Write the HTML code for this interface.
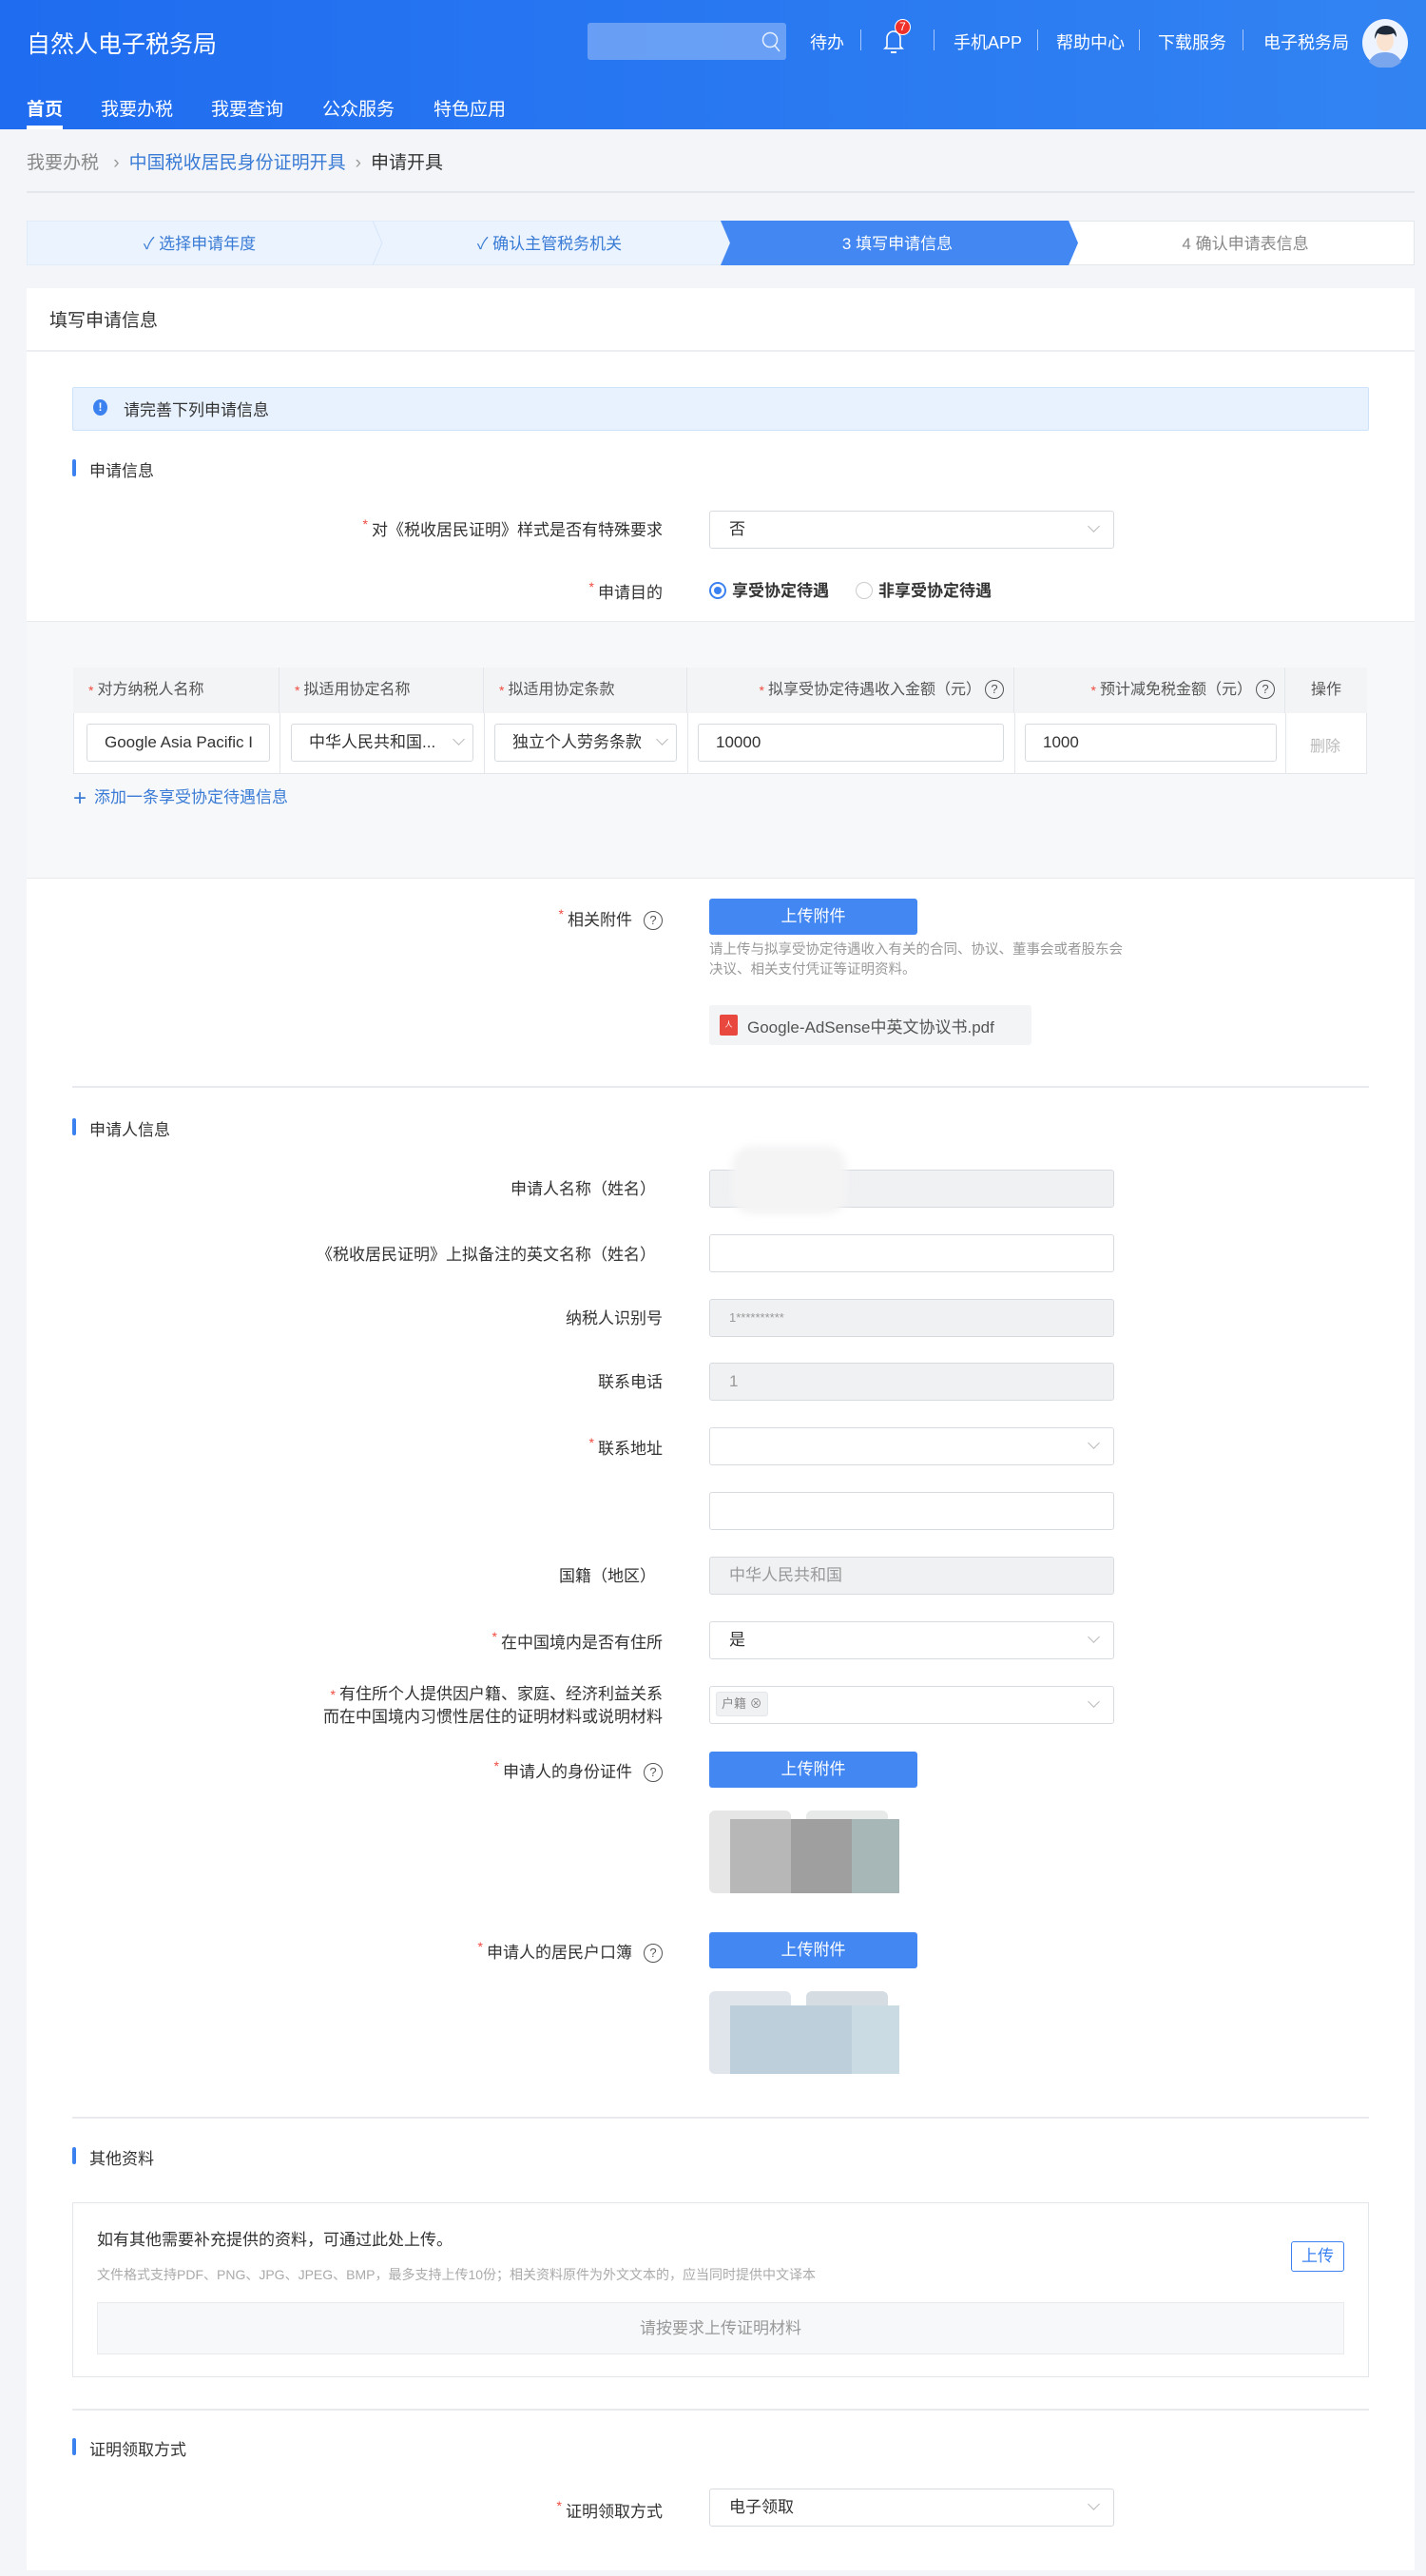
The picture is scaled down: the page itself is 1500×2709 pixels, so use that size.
<!DOCTYPE html>
<html><head><meta charset="utf-8">
<style>
*{box-sizing:border-box;margin:0;padding:0}
body{width:1500px;height:2709px;background:#f3f5f8;font-family:"Liberation Sans","Noto Sans CJK SC",sans-serif;color:#333;position:relative;overflow:hidden}
.a{position:absolute}
.hdr{left:0;top:0;width:1500px;height:136px;background:linear-gradient(90deg,#1f6cf0,#3283f2)}
.wt{color:#fff}
.lbl{position:absolute;right:803px;font-size:17px;color:#333;text-align:right;white-space:nowrap}
.req{color:#f04a3e;margin-right:4px;font-size:14px;vertical-align:top}
.inp{position:absolute;left:746px;width:426px;height:40px;border:1px solid #d7dbe0;border-radius:3px;background:#fff;font-size:17px;padding:0 20px;line-height:38px;color:#333}
.dis{background:#f0f1f3;color:#999}
.arr{position:absolute;right:16px;top:11px;width:9px;height:9px;border-right:1.3px solid #bbb;border-bottom:1.3px solid #bbb;transform:rotate(45deg);}
.sec{position:absolute;left:76px;font-size:17px;color:#333;padding-left:18px}
.sec:before{content:"";position:absolute;left:0;top:2px;width:4px;height:18px;background:#3b82f0;border-radius:2px}
.btn{position:absolute;left:746px;width:219px;height:38px;background:#4287f2;color:#fff;border-radius:3px;font-size:17px;text-align:center;line-height:38px}
.q{display:inline-block;width:20px;height:20px;border:1.5px solid #555;border-radius:50%;font-size:13px;line-height:17px;text-align:center;color:#555;margin-left:12px;vertical-align:1px}
.hr{position:absolute;left:76px;width:1364px;height:2px;background:#e8eaee}
.th{position:absolute;top:702px;height:48px;font-size:16px;color:#555;line-height:48px;padding-left:16px;border-right:1px solid #e3e6ea;white-space:nowrap}
.ti{position:absolute;top:761px;height:40px;border:1px solid #d7dbe0;border-radius:3px;background:#fff;font-size:17px;line-height:38px;padding:0 18px;white-space:nowrap;overflow:hidden;color:#333}
</style></head><body>
<div class="a hdr"></div>
<div class="a wt" style="left:28px;top:27px;font-size:25px">自然人电子税务局</div>
<div class="a" style="left:618px;top:24px;width:209px;height:39px;background:rgba(255,255,255,.3);border-radius:3px"></div>
<svg class="a" style="left:800px;top:32px" width="22" height="24" viewBox="0 0 22 24"><circle cx="10" cy="10" r="7.5" fill="none" stroke="#e6efff" stroke-width="1.5"/><path d="M15 16l5 6" stroke="#e6efff" stroke-width="1.5"/></svg>
<div class="a wt" style="left:852px;top:31px;font-size:18px">待办</div>
<div class="a" style="left:905px;top:31px;width:1px;height:22px;background:#a9c6fb"></div>
<svg class="a" style="left:928px;top:28px" width="24" height="30" viewBox="0 0 24 30"><path d="M5 21V12a7 7 0 0114 0v9l2 2H3z" fill="none" stroke="#fff" stroke-width="1.6"/><path d="M9 27h6" stroke="#fff" stroke-width="2"/></svg>
<div class="a" style="left:941px;top:20px;width:17px;height:17px;border-radius:50%;background:#f0302a;border:1px solid #fff;color:#fff;font-size:12px;text-align:center;line-height:15px">7</div>
<div class="a" style="left:982px;top:31px;width:1px;height:22px;background:#a9c6fb"></div>
<div class="a wt" style="left:1003px;top:31px;font-size:18px">手机APP</div>
<div class="a" style="left:1091px;top:31px;width:1px;height:22px;background:#a9c6fb"></div>
<div class="a wt" style="left:1111px;top:31px;font-size:18px">帮助中心</div>
<div class="a" style="left:1198px;top:31px;width:1px;height:22px;background:#a9c6fb"></div>
<div class="a wt" style="left:1218px;top:31px;font-size:18px">下载服务</div>
<div class="a" style="left:1307px;top:31px;width:1px;height:22px;background:#a9c6fb"></div>
<div class="a wt" style="left:1329px;top:31px;font-size:18px">电子税务局</div>
<svg class="a" style="left:1432px;top:19px" width="50" height="52" viewBox="0 0 50 52"><ellipse cx="25" cy="26" rx="24" ry="25" fill="#eef4ff"/><path d="M8 46c4-8 10-10 17-10s13 2 17 10a24 24 0 01-34 0z" fill="#7aa6ee"/><ellipse cx="25" cy="24" rx="9" ry="11" fill="#fbe3d2"/><path d="M14 22c0-10 6-14 12-14s11 4 11 12l-3-4c-5 2-12 2-17 0z" fill="#1e2a3a"/></svg>
<div class="a wt" style="left:28px;top:100px;font-size:19px;font-weight:bold">首页</div>
<div class="a" style="left:28px;top:132px;width:38px;height:4px;background:#fff"></div>
<div class="a wt" style="left:106px;top:100px;font-size:19px">我要办税</div>
<div class="a wt" style="left:222px;top:100px;font-size:19px">我要查询</div>
<div class="a wt" style="left:339px;top:100px;font-size:19px">公众服务</div>
<div class="a wt" style="left:456px;top:100px;font-size:19px">特色应用</div>

<div class="a" style="left:28px;top:156px;font-size:19px;color:#888">我要办税 <span style="margin:0 10px;color:#999">›</span><span style="color:#3a7bd5">中国税收居民身份证明开具</span><span style="margin:0 10px;color:#999">›</span><span style="color:#333">申请开具</span></div>
<div class="a" style="left:28px;top:201px;width:1460px;height:2px;background:#e3e6ea"></div>

<svg class="a" style="left:28px;top:232px" width="1460" height="47" viewBox="0 0 1460 47">
<rect x="0.5" y="0.5" width="1459" height="46" fill="#fff" stroke="#e3e6ea"/>
<path d="M0 0H364L374 23.5L364 47H0z" fill="#eaf3fe" stroke="#d8e6f8"/>
<path d="M364 0H730L740 23.5L730 47H364L374 23.5z" fill="#eaf3fe" stroke="#d8e6f8"/>
<path d="M730 0H1096L1106 23.5L1096 47H730L740 23.5z" fill="#4287f2"/>
<text x="182" y="30" font-size="17" fill="#3a7bd5" text-anchor="middle" font-family="Liberation Sans,Noto Sans CJK SC,sans-serif">✓ 选择申请年度</text>
<text x="550" y="30" font-size="17" fill="#3a7bd5" text-anchor="middle" font-family="Liberation Sans,Noto Sans CJK SC,sans-serif">✓ 确认主管税务机关</text>
<text x="916" y="30" font-size="17" fill="#fff" text-anchor="middle" font-family="Liberation Sans,Noto Sans CJK SC,sans-serif">3  填写申请信息</text>
<text x="1282" y="30" font-size="17" fill="#888" text-anchor="middle" font-family="Liberation Sans,Noto Sans CJK SC,sans-serif">4  确认申请表信息</text>
</svg>

<div class="a" style="left:28px;top:303px;width:1460px;height:2400px;background:#fff"></div>
<div class="a" style="left:52px;top:322px;font-size:19px;color:#333">填写申请信息</div>
<div class="a" style="left:28px;top:368px;width:1460px;height:2px;background:#eceef1"></div>

<div class="a" style="left:76px;top:407px;width:1364px;height:46px;background:#e8f2fe;border:1px solid #cfe2fb;border-radius:2px"></div>
<div class="a" style="left:98px;top:420px;width:15px;height:17px;border-radius:50%;background:#3b82f0;color:#fff;font-size:12px;font-weight:bold;text-align:center;line-height:17px">!</div>
<div class="a" style="left:130px;top:417px;font-size:17px">请完善下列申请信息</div>

<div class="sec" style="top:481px">申请信息</div>
<div class="lbl" style="top:543px"><span class="req">*</span>对《税收居民证明》样式是否有特殊要求</div>
<div class="inp" style="top:537px">否<i class="arr"></i></div>
<div class="lbl" style="top:609px"><span class="req">*</span>申请目的</div>
<div class="a" style="left:746px;top:607px;font-size:17px;font-weight:bold;color:#333"><span style="display:inline-block;width:18px;height:18px;border:2px solid #3b82f0;border-radius:50%;vertical-align:-3px;margin-right:6px;position:relative"><span style="position:absolute;left:3px;top:3px;width:8px;height:8px;border-radius:50%;background:#3b82f0"></span></span>享受协定待遇<span style="display:inline-block;width:18px;height:18px;border:1px solid #ccc;border-radius:50%;vertical-align:-3px;margin:0 6px 0 28px"></span>非享受协定待遇</div>

<div class="a" style="left:28px;top:653px;width:1460px;height:271px;background:#f7f8fa;border-top:1px solid #e8eaee;border-bottom:1px solid #e8eaee"></div>
<div class="a" style="left:77px;top:702px;width:1361px;height:112px;border:1px solid #e3e6ea;background:#fff"></div>
<div class="a" style="left:77px;top:702px;width:1361px;height:48px;background:#f3f4f6"></div>
<div class="th" style="left:77px;width:217px"><span class="req">*</span>对方纳税人名称</div>
<div class="th" style="left:294px;width:215px"><span class="req">*</span>拟适用协定名称</div>
<div class="th" style="left:509px;width:214px"><span class="req">*</span>拟适用协定条款</div>
<div class="th" style="left:723px;width:344px;text-align:right;padding-right:10px"><span class="req">*</span>拟享受协定待遇收入金额（元）<span class="q" style="margin-left:4px">?</span></div>
<div class="th" style="left:1067px;width:285px;text-align:right;padding-right:10px"><span class="req">*</span>预计减免税金额（元）<span class="q" style="margin-left:4px">?</span></div>
<div class="th" style="left:1352px;width:86px;border:none;padding:0;text-align:center">操作</div>
<div class="a" style="left:294px;top:750px;width:1px;height:64px;background:#e3e6ea"></div>
<div class="a" style="left:509px;top:750px;width:1px;height:64px;background:#e3e6ea"></div>
<div class="a" style="left:723px;top:750px;width:1px;height:64px;background:#e3e6ea"></div>
<div class="a" style="left:1067px;top:750px;width:1px;height:64px;background:#e3e6ea"></div>
<div class="a" style="left:1352px;top:750px;width:1px;height:64px;background:#e3e6ea"></div>
<div class="ti" style="left:91px;width:193px">Google Asia Pacific I</div>
<div class="ti" style="left:306px;width:192px">中华人民共和国...<i class="arr" style="right:10px"></i></div>
<div class="ti" style="left:520px;width:192px;padding-left:18px">独立个人劳务条款<i class="arr" style="right:10px"></i></div>
<div class="ti" style="left:734px;width:322px">10000</div>
<div class="ti" style="left:1078px;width:265px">1000</div>
<div class="a" style="left:1378px;top:771px;font-size:16px;color:#bbb">删除</div>
<div class="a" style="left:77px;top:824px;font-size:17px;color:#3a7bd5"><span style="font-size:24px;vertical-align:-3px;margin-right:8px">+</span>添加一条享受协定待遇信息</div>

<div class="lbl" style="top:953px"><span class="req">*</span>相关附件<span class="q">?</span></div>
<div class="btn" style="top:945px">上传附件</div>
<div class="a" style="left:746px;top:989px;font-size:14.5px;color:#999;line-height:21px;width:440px">请上传与拟享受协定待遇收入有关的合同、协议、董事会或者股东会决议、相关支付凭证等证明资料。</div>
<div class="a" style="left:746px;top:1057px;width:339px;height:42px;background:#f3f4f6;border-radius:3px"></div>
<div class="a" style="left:757px;top:1067px;width:19px;height:22px;background:#e9483f;border-radius:2px;color:#fff;font-size:8px;text-align:center;line-height:22px">人</div>
<div class="a" style="left:786px;top:1066px;font-size:17px;color:#555">Google-AdSense中英文协议书.pdf</div>

<div class="hr" style="top:1142px"></div>
<div class="sec" style="top:1174px">申请人信息</div>

<div class="lbl" style="top:1236px;right:810px">申请人名称（姓名）</div>
<div class="inp dis" style="top:1230px"></div>
<div class="a" style="left:770px;top:1205px;width:120px;height:72px;background:#f4f4f5;border-radius:20px;filter:blur(4px)"></div>
<div class="lbl" style="top:1305px;right:810px">《税收居民证明》上拟备注的英文名称（姓名）</div>
<div class="inp" style="top:1298px"></div>
<div class="lbl" style="top:1372px">纳税人识别号</div>
<div class="inp dis" style="top:1366px;font-size:13px;color:#999">1**********</div>
<div class="lbl" style="top:1439px">联系电话</div>
<div class="inp dis" style="top:1433px;color:#999">1</div>
<div class="lbl" style="top:1509px"><span class="req">*</span>联系地址</div>
<div class="inp" style="top:1501px"><i class="arr"></i></div>
<div class="inp" style="top:1569px"></div>
<div class="lbl" style="top:1643px;right:810px">国籍（地区）</div>
<div class="inp dis" style="top:1637px">中华人民共和国</div>
<div class="lbl" style="top:1713px"><span class="req">*</span>在中国境内是否有住所</div>
<div class="inp" style="top:1705px">是<i class="arr"></i></div>
<div class="lbl" style="top:1770px;line-height:24px"><span class="req">*</span>有住所个人提供因户籍、家庭、经济利益关系<br>而在中国境内习惯性居住的证明材料或说明材料</div>
<div class="inp" style="top:1773px;padding-left:6px"><span style="display:inline-block;background:#f0f1f3;border:1px solid #e3e6ea;border-radius:3px;font-size:13px;color:#888;line-height:24px;padding:0 5px;vertical-align:2px">户籍 ⊗</span><i class="arr"></i></div>
<div class="lbl" style="top:1849px"><span class="req">*</span>申请人的身份证件<span class="q">?</span></div>
<div class="btn" style="top:1842px">上传附件</div>
<div class="a" style="left:746px;top:1904px;width:86px;height:87px;background:#e6e6e6;border-radius:6px"></div>
<div class="a" style="left:848px;top:1904px;width:86px;height:87px;background:#e8eaea;border-radius:6px"></div>
<div class="a" style="left:768px;top:1913px;width:64px;height:78px;background:#b7b7b7"></div>
<div class="a" style="left:832px;top:1913px;width:64px;height:78px;background:#9f9f9f"></div>
<div class="a" style="left:896px;top:1913px;width:50px;height:78px;background:#a7b6b6"></div>
<div class="lbl" style="top:2039px"><span class="req">*</span>申请人的居民户口簿<span class="q">?</span></div>
<div class="btn" style="top:2032px">上传附件</div>
<div class="a" style="left:746px;top:2094px;width:86px;height:87px;background:#dfe5ea;border-radius:6px"></div>
<div class="a" style="left:848px;top:2094px;width:86px;height:87px;background:#d5dde2;border-radius:6px"></div>
<div class="a" style="left:768px;top:2109px;width:128px;height:72px;background:#bccfdb"></div>
<div class="a" style="left:896px;top:2109px;width:50px;height:72px;background:#cbdbe4"></div>

<div class="hr" style="top:2226px"></div>
<div class="sec" style="top:2256px">其他资料</div>
<div class="a" style="left:76px;top:2316px;width:1364px;height:184px;border:1px solid #e3e6ea"></div>
<div class="a" style="left:102px;top:2341px;font-size:17px;color:#333">如有其他需要补充提供的资料，可通过此处上传。</div>
<div class="a" style="left:102px;top:2382px;font-size:14px;color:#aaa">文件格式支持PDF、PNG、JPG、JPEG、BMP，最多支持上传10份；相关资料原件为外文文本的，应当同时提供中文译本</div>
<div class="a" style="left:1358px;top:2357px;width:56px;height:32px;border:1.5px solid #3b82f0;border-radius:3px;color:#3b82f0;font-size:17px;text-align:center;line-height:29px">上传</div>
<div class="a" style="left:102px;top:2421px;width:1312px;height:55px;background:#f7f8fa;border:1px solid #e8eaee;font-size:17px;color:#999;text-align:center;line-height:53px">请按要求上传证明材料</div>

<div class="hr" style="top:2533px"></div>
<div class="sec" style="top:2562px">证明领取方式</div>
<div class="lbl" style="top:2627px"><span class="req">*</span>证明领取方式</div>
<div class="inp" style="top:2617px">电子领取<i class="arr"></i></div>
</body></html>
